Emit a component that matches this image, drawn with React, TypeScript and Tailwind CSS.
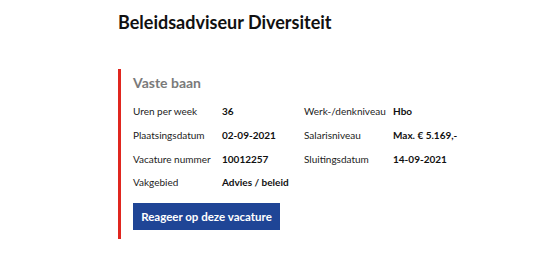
import React from "react";

const rows: [string, string, string?, string?][] = [
  ["Uren per week", "36", "Werk-/denkniveau", "Hbo"],
  ["Plaatsingsdatum", "02-09-2021", "Salarisniveau", "Max. € 5.169,-"],
  ["Vacature nummer", "10012257", "Sluitingsdatum", "14-09-2021"],
  ["Vakgebied", "Advies / beleid"],
];

const App = () => {
  return (
    <div
      className="min-h-screen bg-white text-[#111] pl-[118px] pt-[11px]"
      style={{ fontFamily: "Lato, 'Open Sans', sans-serif" }}
    >
      <h1 className="text-[18px] font-bold leading-[22px]">
        Beleidsadviseur Diversiteit
      </h1>
      <div className="mt-[36px] border-l-[3px] border-[#e0261f] pl-[12px] pt-[4px] pb-[9px]">
        <h2 className="text-[14px] font-bold text-[#7a7a7a] leading-[20px]">
          Vaste baan
        </h2>
        <div className="mt-[7px] grid grid-cols-[89px_82px_89px_auto] auto-rows-[23.7px] items-center text-[10px] whitespace-nowrap">
          {rows.map(([l1, v1, l2, v2]) => (
            <React.Fragment key={l1}>
              <span className="text-[#222]">{l1}</span>
              <span className="font-bold">{v1}</span>
              <span className="text-[#222]">{l2 ?? ""}</span>
              <span className="font-bold">{v2 ?? ""}</span>
            </React.Fragment>
          ))}
        </div>
        <button className="mt-[8px] h-[27px] w-[147px] bg-[#1f4596] text-white text-[11.5px] font-bold whitespace-nowrap">
          Reageer op deze vacature
        </button>
      </div>
    </div>
  );
};

export default App;
